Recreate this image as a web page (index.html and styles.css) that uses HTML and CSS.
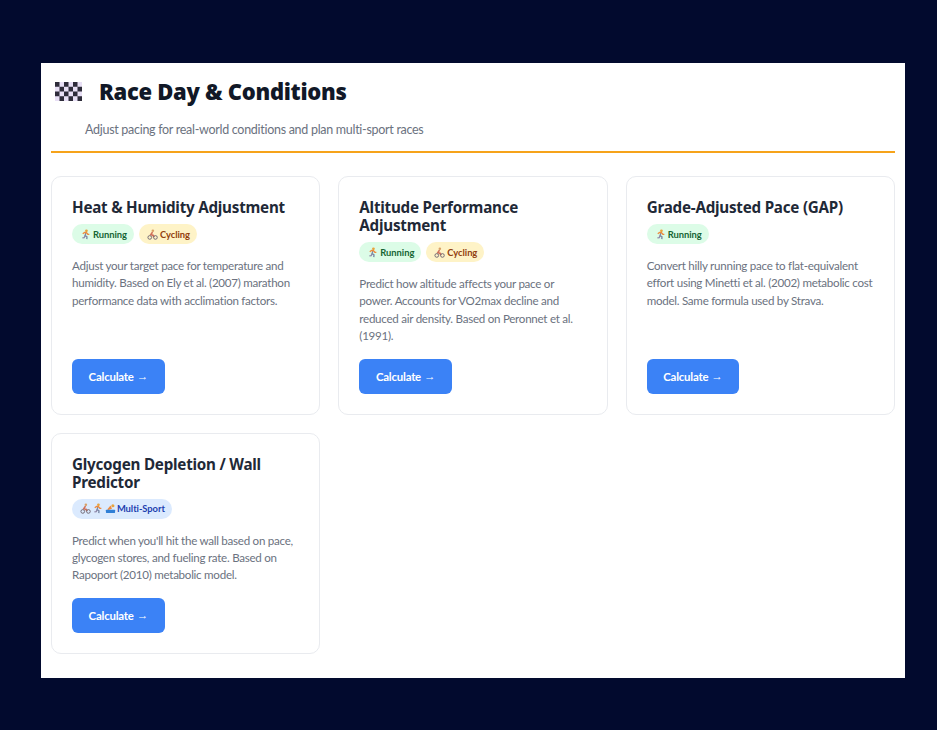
FILE: index.html
```html
<!DOCTYPE html>
<html lang="en">
<head>
<meta charset="utf-8">
<title>Race Day &amp; Conditions</title>
<link rel="stylesheet" href="styles.css">
</head>
<body>
<svg class="defs" width="0" height="0" aria-hidden="true">
  <defs>
    <pattern id="chk" width="9" height="9.5" patternUnits="userSpaceOnUse">
      <rect width="9" height="9.5" fill="#e8dff5"/>
      <rect width="4.5" height="4.75" fill="#2e2c3a"/>
      <rect x="4.5" y="4.75" width="4.5" height="4.75" fill="#2e2c3a"/>
    </pattern>
    <symbol id="run" viewBox="0 0 12 12">
      <circle cx="7" cy="2" r="1.5" fill="#e8a33d"/>
      <path d="M6.5 4 5.6 7.2 7.6 8.6 7.4 11" fill="none" stroke="#7a8aa8" stroke-width="1.5"/>
      <path d="M5.6 7.2 4.6 9.4 2.6 9.8" fill="none" stroke="#8f86a8" stroke-width="1.4"/>
      <path d="M3 5.2 5 3.8 7 4 8.6 5.8 10.2 5.8" fill="none" stroke="#ef8a3c" stroke-width="1.5"/>
    </symbol>
    <symbol id="bike" viewBox="0 0 12 12">
      <circle cx="6.4" cy="1.9" r="1.4" fill="#d9a066"/>
      <path d="M6 3.4 4.2 6 6.8 7 7.4 9" fill="none" stroke="#d0705a" stroke-width="1.8"/>
      <circle cx="3" cy="9.2" r="2" fill="none" stroke="#6b6470" stroke-width="1"/>
      <circle cx="9.2" cy="9.2" r="2" fill="none" stroke="#6b6470" stroke-width="1"/>
    </symbol>
    <symbol id="swim" viewBox="0 0 12 12">
      <circle cx="8.6" cy="3" r="1.7" fill="#e8a33d"/>
      <path d="M2.4 7 6 2.8 7.6 6.4 3.6 7.6Z" fill="#ef8a3c"/>
      <rect x="1" y="7.4" width="10" height="3.4" rx=".6" fill="#2f7fd6"/>
    </symbol>
  </defs>
</svg>
<main class="panel">
  <header class="head">
    <div class="title-row">
      <svg class="flag" viewBox="0 0 27 19" aria-hidden="true"><rect width="27" height="19" fill="url(#chk)"/></svg>
      <h1>Race Day &amp; Conditions</h1>
    </div>
    <p class="sub">Adjust pacing for real-world conditions and plan multi-sport races</p>
  </header>
  <section class="grid">
    <article class="card">
      <h3>Heat &amp; Humidity Adjustment</h3>
      <div class="tags">
        <span class="tag run"><svg class="ic"><use href="#run"/></svg>Running</span>
        <span class="tag cyc"><svg class="ic"><use href="#bike"/></svg>Cycling</span>
      </div>
      <p class="desc">Adjust your target pace for temperature and humidity. Based on Ely et al. (2007) marathon performance data with acclimation factors.</p>
      <a class="btn">Calculate <span class="arrow">→</span></a>
    </article>
    <article class="card">
      <h3>Altitude Performance Adjustment</h3>
      <div class="tags">
        <span class="tag run"><svg class="ic"><use href="#run"/></svg>Running</span>
        <span class="tag cyc"><svg class="ic"><use href="#bike"/></svg>Cycling</span>
      </div>
      <p class="desc">Predict how altitude affects your pace or power. Accounts for VO2max decline and reduced air density. Based on Peronnet et al. (1991).</p>
      <a class="btn">Calculate <span class="arrow">→</span></a>
    </article>
    <article class="card">
      <h3>Grade-Adjusted Pace (GAP)</h3>
      <div class="tags">
        <span class="tag run"><svg class="ic"><use href="#run"/></svg>Running</span>
      </div>
      <p class="desc">Convert hilly running pace to flat-equivalent effort using Minetti et al. (2002) metabolic cost model. Same formula used by Strava.</p>
      <a class="btn">Calculate <span class="arrow">→</span></a>
    </article>
    <article class="card">
      <h3>Glycogen Depletion / Wall Predictor</h3>
      <div class="tags">
        <span class="tag multi"><svg class="ic"><use href="#bike"/></svg><svg class="ic"><use href="#run"/></svg><svg class="ic"><use href="#swim"/></svg>Multi-Sport</span>
      </div>
      <p class="desc">Predict when you'll hit the wall based on pace, glycogen stores, and fueling rate. Based on Rapoport (2010) metabolic model.</p>
      <a class="btn">Calculate <span class="arrow">→</span></a>
    </article>
  </section>
</main>
</body>
</html>
```
FILE: styles.css
```css
* { box-sizing: border-box; }
html, body { height: 100%; }
body {
  margin: 0;
  padding: 63px 32px 52px 41px;
  background: #020a2e;
  font-family: Lato, Roboto, sans-serif;
  font-variant-ligatures: none;
  overflow: hidden;
}
.defs { position: absolute; }
.panel {
  width: 864px;
  height: 615px;
  background: #fff;
  padding: 10px 10px 0;
}
.head {
  height: 80px;
  border-bottom: 2px solid #f6a31a;
}
.title-row {
  display: flex;
  align-items: center;
  gap: 17px;
  padding: 9px 0 0 4px;
}
.flag { width: 27px; height: 19px; flex: none; }
h1 {
  margin: -2px 0 0;
  font-family: "Noto Sans", sans-serif;
  font-size: 22px;
  line-height: 20px;
  letter-spacing: -0.3px;
  font-weight: 900;
  color: #111827;
}
.sub {
  margin: 20px 0 0 34px;
  font-size: 12.5px;
  line-height: 18px;
  letter-spacing: -0.29px;
  color: #6b7280;
}
.grid {
  display: grid;
  grid-template-columns: repeat(3, 1fr);
  gap: 18px;
  margin-top: 23px;
}
.card {
  display: flex;
  flex-direction: column;
  align-items: flex-start;
  border: 1px solid #e9ebef;
  border-radius: 10px;
  padding: 21px 20px 20px;
}
h3 {
  margin: 0 0 8px;
  font-family: "Noto Sans", sans-serif;
  font-size: 15.2px;
  line-height: 18px;
  letter-spacing: -0.23px;
  font-weight: 700;
  color: #1f2937;
}
.tags { display: flex; gap: 5px; margin-bottom: 13px; }
.tag {
  display: inline-flex;
  align-items: center;
  height: 20px;
  padding: 0 7px 0 8px;
  border-radius: 10px;
  font-size: 9.4px;
  letter-spacing: -0.05px;
  font-weight: 700;
}
.ic { width: 11px; height: 11px; margin-right: 2px; flex: none; }
.multi .ic { margin-right: 1.3px; }
.run { background: #dcfce7; color: #166534; }
.cyc { background: #fef3c7; color: #92400e; }
.multi { background: #dbeafe; color: #1e40af; }
.desc {
  flex: 1;
  margin: 0 0 14px;
  font-size: 11.6px;
  line-height: 17.4px;
  letter-spacing: -0.27px;
  color: #6b7280;
}
.btn {
  display: inline-flex;
  align-items: center;
  justify-content: center;
  gap: 3px;
  width: 92.5px;
  height: 35px;
  background: #3b82f6;
  border-radius: 6px;
  color: #fff;
  font-size: 11.4px;
  letter-spacing: -0.2px;
  font-weight: 700;
}
.arrow { font-family: Roboto, sans-serif; font-weight: 500; }
```
